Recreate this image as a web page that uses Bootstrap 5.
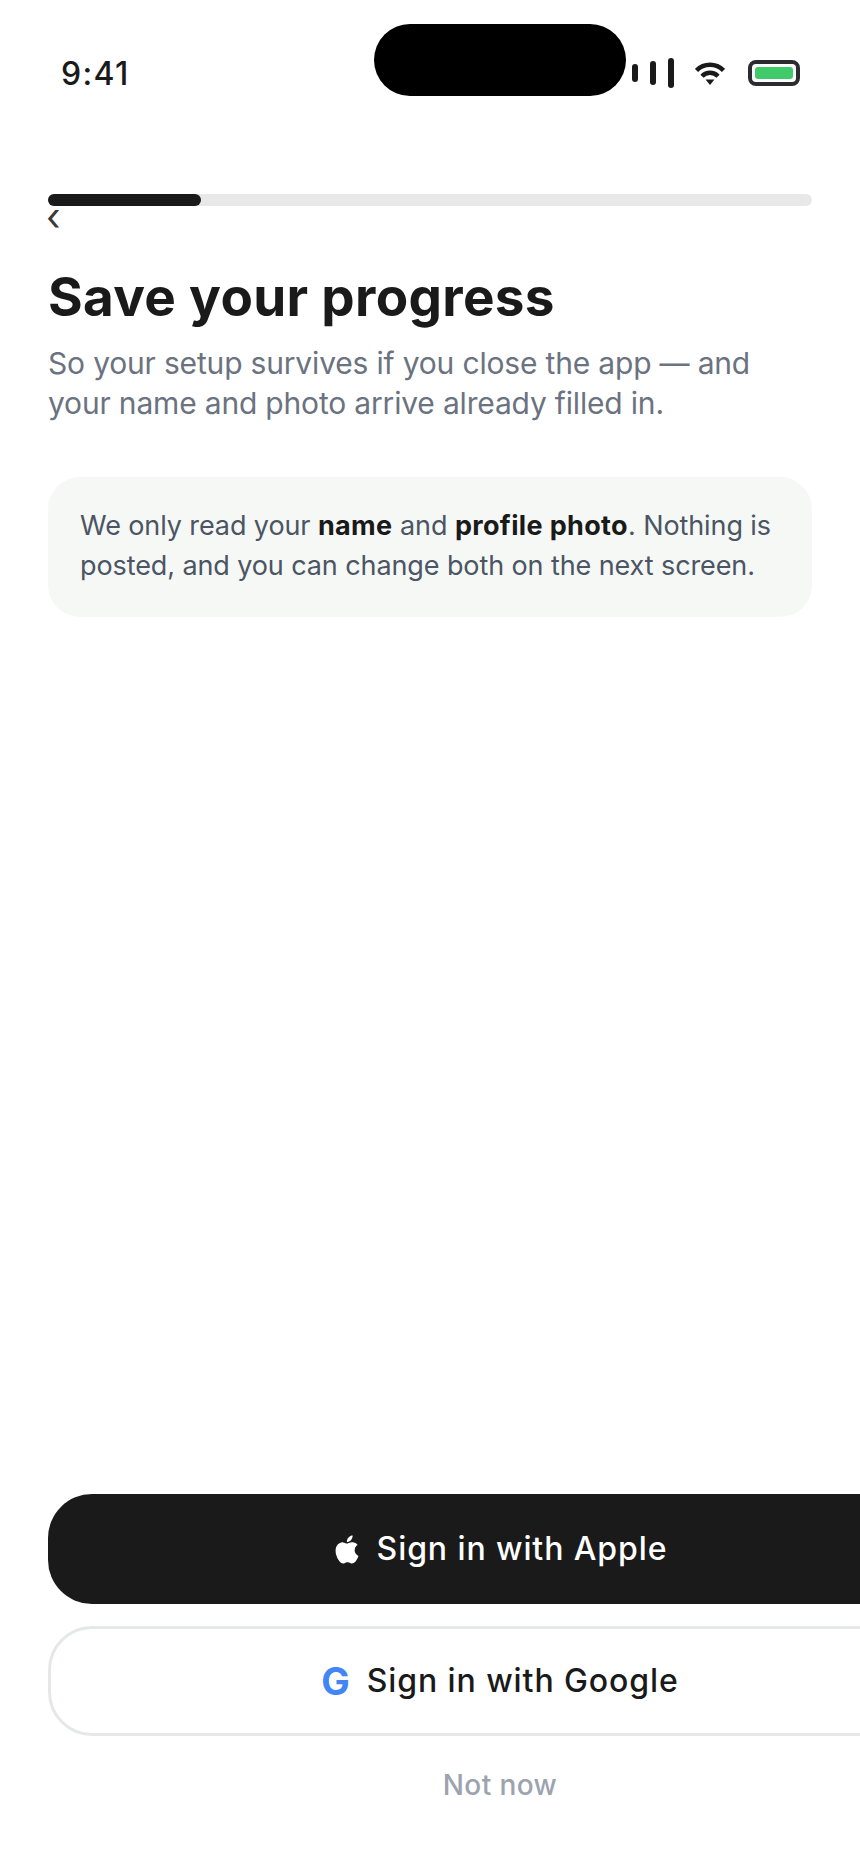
<!DOCTYPE html>
<html lang="en">
<head>
  <meta charset="UTF-8" />
  <meta name="viewport" content="width=device-width, initial-scale=1.0" />
  <title>Save your progress</title>
  <link href="https://cdn.jsdelivr.net/npm/bootstrap@5.3.3/dist/css/bootstrap.min.css" rel="stylesheet">
  <style>
    html, body { height: 100%; }
    body {
      font-family: "Inter", "Liberation Sans", sans-serif;
      background: #fff;
      color: #1a1a1a;
      overflow: hidden;
    }
    .screen { height: 1869px; padding: 24px 48px 0; }
    .status-row { height: 72px; margin-left: 13px; }
    .status-time { width: 313px; margin-top: 35px; font-size: 32px; line-height: 30px; font-weight: 500; letter-spacing: 1.3px; }
    .status-island { width: 252px; height: 72px; background: #000; border-radius: 36px; }
    .status-icons { margin: 34px 0 0 6px; }
    .signal-bar { width: 6px; background: #1a1a1a; border-radius: 3px; }
    .bar-a { height: 18px; }
    .bar-b { height: 24px; margin-left: 12px; }
    .bar-c { height: 30px; margin-left: 12px; }
    .wifi-icon { margin-left: 21px; }
    .battery-box { width: 52px; height: 26px; margin-left: 23px; border: 4px solid #2c2c30; border-radius: 8px; padding: 3px; }
    .battery-fill { height: 100%; background: #40cb6a; border-radius: 3px; }
    .step-track { height: 12px; margin-top: 98px; background: #e8e8e8; border-radius: 6px; }
    .step-fill { width: 20%; height: 100%; background: #1a1a1a; border-radius: 6px; }
    .back-link { display: block; width: 24px; height: 24px; margin-left: -2px; font-size: 38px; line-height: 21px; color: #3a3a3a; text-decoration: none; }
    .page-title { margin: 35px 0 0; font-size: 53px; line-height: 64px; font-weight: 700; letter-spacing: .32px; color: #1a1a1a; }
    .page-sub { margin: 14px 0 0; font-size: 30px; line-height: 40px; letter-spacing: -.18px; color: #6b7280; }
    .note-box { margin-top: 54px; padding: 29px 32px 31px; background: #f6f8f6; border-radius: 32px; font-size: 27px; line-height: 40px; letter-spacing: -.1px; color: #4b5563; }
    .note-box strong { font-weight: 700; letter-spacing: .35px; color: #1a1a1a; }
    .action-stack { width: 904px; margin-top: auto; padding-bottom: 63px; }
    .action-btn { height: 110px; border-radius: 44px; font-size: 32px; font-weight: 500; letter-spacing: .9px; }
    .apple-btn { background: #1a1a1a; border: 0; color: #fff; }
    .apple-btn:hover { background: #1a1a1a; color: #fff; }
    .google-btn { background: #fff; border: 3px solid #e5e7eb; color: #1a1a1a; margin-top: 22px; }
    .google-glyph { font-size: 38px; font-weight: 700; color: #4285f4; line-height: 1; }
    .later-btn { margin-top: 28px; font-size: 28px; font-weight: 500; letter-spacing: .4px; color: #9ca3af; padding: 0; border: 0; }
  </style>
</head>
<body>
  <div class="screen d-flex flex-column">
    <div class="status-row d-flex align-items-start">
      <div class="status-time">9:41</div>
      <div class="status-island"></div>
      <div class="status-icons d-flex align-items-center">
        <span class="signal-bar bar-a"></span>
        <span class="signal-bar bar-b"></span>
        <span class="signal-bar bar-c"></span>
        <svg class="wifi-icon" width="30" height="23" viewBox="0 0 30 23" fill="none" stroke="#1a1a1a" stroke-width="4.5">
          <path d="M1.5 8.5a19 19 0 0 1 27 0"/>
          <path d="M7 14.2a11.2 11.2 0 0 1 16 0"/>
          <path d="M10.5 17.5h9L15 23z" fill="#1a1a1a" stroke="none"/>
        </svg>
        <div class="battery-box"><div class="battery-fill"></div></div>
      </div>
    </div>

    <div class="step-track"><div class="step-fill"></div></div>
    <a class="back-link" href="#">‹</a>

    <h1 class="page-title">Save your progress</h1>
    <p class="page-sub">So your setup survives if you close the app — and your name and photo arrive already filled in.</p>

    <div class="note-box">We only read your <strong>name</strong> and <strong>profile photo</strong>. Nothing is posted, and you can change both on the next screen.</div>

    <div class="action-stack d-flex flex-column">
      <button class="btn action-btn apple-btn d-flex align-items-center justify-content-center gap-3">
        <svg width="28" height="29" viewBox="0 0 16 16" fill="#fff"><path d="M11.182.008C11.148-.03 9.923.023 8.857 1.18c-1.066 1.156-.902 2.482-.878 2.516s1.52.087 2.475-1.258.762-2.391.728-2.43m3.314 11.733c-.048-.096-2.325-1.234-2.113-3.422s1.675-2.789 1.698-2.854-.597-.79-1.254-1.157a3.7 3.7 0 0 0-1.563-.434c-.108-.003-.483-.095-1.254.116-.508.139-1.653.589-1.968.607-.316.018-1.256-.522-2.267-.665-.647-.125-1.333.131-1.824.328-.49.196-1.422.754-2.074 2.237-.652 1.482-.311 3.83-.067 4.56s.625 1.924 1.273 2.796c.576.984 1.34 1.667 1.659 1.899s1.219.386 1.843.067c.502-.308 1.408-.485 1.766-.472.357.013 1.061.154 1.782.539.571.197 1.111.115 1.652-.105.541-.221 1.324-1.059 2.238-2.758q.52-1.185.473-1.282"/></svg>
        <span>Sign in with Apple</span>
      </button>
      <button class="btn action-btn google-btn d-flex align-items-center justify-content-center gap-3">
        <span class="google-glyph">G</span>
        <span>Sign in with Google</span>
      </button>
      <button class="btn later-btn">Not now</button>
    </div>
  </div>
  <script src="https://cdn.jsdelivr.net/npm/bootstrap@5.3.3/dist/js/bootstrap.bundle.min.js"></script>
</body>
</html>
